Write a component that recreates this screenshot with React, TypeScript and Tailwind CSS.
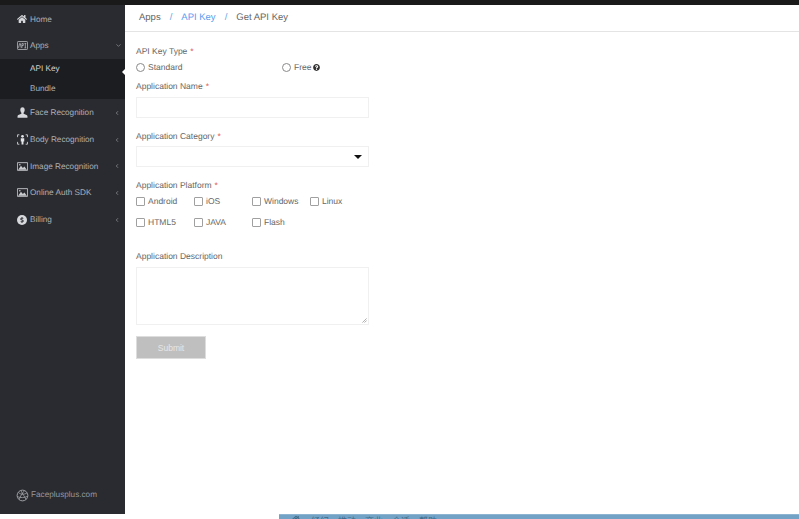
import { ChevronDown, ChevronLeft } from "lucide-react";
import { FaHome, FaQuestionCircle, FaDollarSign } from "react-icons/fa";

function ApiIcon() {
	return (
		<svg viewBox="0 0 14 11" className="w-[11px] h-[9px]">
			<rect x="0.5" y="0.5" width="13" height="10" rx="1" fill="none" stroke="#c4c6ca" />
			<path d="M2 8.5 L3.3 3 H4.2 L5.4 8.5 M6.3 8.5 V3 H8 V5.5 H6.3 M9.5 3 H11.8 M10.6 3 V8.5 M9.5 8.5 H11.8" fill="none" stroke="#c4c6ca" strokeWidth="0.9" />
		</svg>
	);
}

function UserIcon() {
	return (
		<svg viewBox="0 0 12 12" className="w-[11px] h-[11px]">
			<path d="M3.6 3 C3.6 1.2 4.8 0.3 6 0.3 C7.2 0.3 8.4 1.2 8.4 3 C8.4 4.5 7.8 5.6 7.2 6.3 V7.4 C8.8 8 11.2 8.6 11.4 9.8 V11.6 H0.6 V9.8 C0.8 8.6 3.2 8 4.8 7.4 V6.3 C4.2 5.6 3.6 4.5 3.6 3 Z" fill="#d6d8dc" />
		</svg>
	);
}

function BodyIcon() {
	return (
		<svg viewBox="0 0 14 14" className="w-[11px] h-[11px]">
			<path d="M0.7 4 V1 H3 M13.3 4 V1 H11 M0.7 10 V13 H3 M13.3 10 V13 H11" fill="none" stroke="#d4d6da" strokeWidth="1.1" />
			<circle cx="7" cy="3" r="1.7" fill="#e4e6ea" />
			<path d="M4.8 5.4 H9.2 V9.4 H8.2 V13.4 H5.8 V9.4 H4.8 Z" fill="#e4e6ea" />
		</svg>
	);
}

function ImageIcon() {
	return (
		<svg viewBox="0 0 14 11" className="w-[11px] h-[9px]">
			<rect x="0" y="0" width="14" height="11" rx="1" fill="#c9cbcf" />
			<rect x="1" y="1.2" width="12" height="8.6" fill="#2a2b30" />
			<path d="M1.5 9.5 L5 4.5 L7.5 7.5 L9.5 5.5 L12.5 9.5 Z" fill="#c9cbcf" />
			<circle cx="3.6" cy="3.2" r="1" fill="#c9cbcf" />
		</svg>
	);
}

function BillingIcon() {
	return (
		<span className="w-[10px] h-[10px] rounded-full bg-[#d6d8dc] flex items-center justify-center">
			<FaDollarSign className="w-[6px] h-[6px] text-[#2a2b30]" />
		</span>
	);
}

function GlobeIcon() {
	return (
		<svg viewBox="0 0 16 16" className="w-[13px] h-[13px]">
			<circle cx="8" cy="8" r="6.6" fill="none" stroke="#a9abb0" strokeWidth="1.1" />
			<path d="M3 4.5 C6 7 10 7 13.5 5 M4 13 C5 9 8 5 10.5 2 M6 2 C8 6 11 10 12.5 13 M1.8 9.5 C6 11 10 11 14.3 9" fill="none" stroke="#a9abb0" strokeWidth="0.9" />
		</svg>
	);
}

const navItems = [
	{ label: "Face Recognition", icon: <UserIcon />, h: "h-[27px]" },
	{ label: "Body Recognition", icon: <BodyIcon />, h: "h-[27px]" },
	{ label: "Image Recognition", icon: <ImageIcon />, h: "h-[26px]" },
	{ label: "Online Auth SDK", icon: <ImageIcon />, h: "h-[27px]" },
	{ label: "Billing", icon: <BillingIcon />, h: "h-[27px]" },
];

function Sidebar() {
	return (
		<aside className="w-[125px] shrink-0 bg-[#2a2b30] flex flex-col text-[8.2px] text-[#aeb0b5]">
			<div className="h-[26px] flex items-center pl-[17px] mt-[1px]">
				<span className="w-[13px] flex justify-start">
					<FaHome className="w-[10px] h-[10px] text-[#d6d8dc]" />
				</span>
				<span className="pt-[2px]">Home</span>
			</div>
			<div className="h-[27px] pb-[1px] flex items-center pl-[17px]">
				<span className="w-[13px] flex justify-start">
					<ApiIcon />
				</span>
				<span className="pt-[2px]">Apps</span>
				<ChevronDown className="ml-auto mr-[3px] w-[7px] h-[7px] text-[#8e9095]" strokeWidth={2.5} />
			</div>
			<div className="relative bg-[#1c1d21] h-[40px] flex flex-col pl-[30px]">
				<div className="h-[19px] pt-[2px] flex items-center text-[#d0d2d6]">API Key</div>
				<div className="h-[21px] pt-[2px] flex items-center">Bundle</div>
				<span className="absolute right-0 top-[10px] w-0 h-0 border-y-[3px] border-y-transparent border-r-[3px] border-r-white" />
			</div>
			{navItems.map((item) => (
				<div key={item.label} className={`${item.h} flex items-center pl-[17px]`}>
					<span className="w-[13px] flex justify-start">{item.icon}</span>
					<span className="pt-[2px]">{item.label}</span>
					<ChevronLeft className="ml-auto mr-[5px] w-[6px] h-[6px] text-[#8e9095]" strokeWidth={3} />
				</div>
			))}
			<div className="mt-auto h-[38px] flex items-center pl-[16px] gap-[2px] text-[#96989d]">
				<GlobeIcon />
				<span>Faceplusplus.com</span>
			</div>
		</aside>
	);
}

function Star() {
	return <span className="text-[#e0544c] ml-[3px]">*</span>;
}

function Check({ label, w }: { label: string; w: string }) {
	return (
		<label className={`${w} flex items-center gap-[3px]`}>
			<span className="w-[9px] h-[9px] rounded-[1px] border border-[#a0a0a0] bg-white" />
			<span>{label}</span>
		</label>
	);
}

function Form() {
	return (
		<div className="pl-[11px] pt-[14px] w-[244px] text-[8.5px] leading-[11px] text-[#666666]">
			<div className="h-[11px]">
				API Key Type
				<Star />
			</div>
			<div className="flex h-[11px] mt-[5px]">
				<label className="w-[146px] flex items-center gap-[3px]">
					<span className="w-[9px] h-[9px] rounded-full border border-[#8a8a8a] bg-white" />
					<span>Standard</span>
				</label>
				<label className="flex items-center gap-[3px]">
					<span className="w-[9px] h-[9px] rounded-full border border-[#8a8a8a] bg-white" />
					<span>Free</span>
					<FaQuestionCircle className="w-[7px] h-[7px] -ml-[1px] text-[#333]" />
				</label>
			</div>
			<div className="h-[11px] mt-[8px]">
				Application Name
				<Star />
			</div>
			<div className="h-[21px] mt-[5px] border border-[#f0f0f0] bg-white" />
			<div className="h-[11px] mt-[13px]">
				Application Category
				<Star />
			</div>
			<div className="h-[21px] mt-[4px] border border-[#f0f0f0] bg-white flex items-center justify-end pr-[6px]">
				<span className="w-0 h-0 border-x-[4px] border-x-transparent border-t-[4px] border-t-[#111]" />
			</div>
			<div className="h-[11px] mt-[13px]">
				Application Platform
				<Star />
			</div>
			<div className="flex h-[11px] mt-[5px]">
				<Check label="Android" w="w-[58px]" />
				<Check label="iOS" w="w-[58px]" />
				<Check label="Windows" w="w-[58px]" />
				<Check label="Linux" w="w-[50px]" />
			</div>
			<div className="flex h-[11px] mt-[10px]">
				<Check label="HTML5" w="w-[58px]" />
				<Check label="JAVA" w="w-[58px]" />
				<Check label="Flash" w="w-[58px]" />
			</div>
			<div className="h-[11px] mt-[23px]">Application Description</div>
			<div className="relative h-[58px] mt-[5px] border border-[#f0f0f0] bg-white">
				<svg viewBox="0 0 6 6" className="absolute right-[1px] bottom-[1px] w-[5px] h-[5px]">
					<path d="M0.5 5.5 L5.5 0.5 M3 5.5 L5.5 3" stroke="#777" strokeWidth="0.7" />
				</svg>
			</div>
			<button className="block w-[70px] h-[23px] mt-[11px] pt-[1px] bg-[#bfbfbf] border border-[#dddddd] text-[#e6e6e6] text-[8.5px]">
				Submit
			</button>
		</div>
	);
}

export default function App() {
	return (
		<div className="w-[799px] h-[519px] overflow-hidden flex flex-col bg-white font-['Liberation_Sans',Arial,sans-serif] [text-rendering:geometricPrecision]">
			<div className="h-[5px] shrink-0 bg-[#1a1a1a]" />
			<div className="flex-1 min-h-0 flex">
				<Sidebar />
				<main className="flex-1 min-w-0">
					<div className="h-[27px] pt-[1px] border-b border-[#e4e4e4] flex items-center pl-[14px] text-[9.5px] text-[#666666]">
						<span>Apps</span>
						<span className="mx-[9px] text-[#6aa5e8]">/</span>
						<span className="text-[#5a9df0]">API Key</span>
						<span className="mx-[9px] text-[#6aa5e8]">/</span>
						<span>Get API Key</span>
					</div>
					<Form />
				</main>
			</div>
			<div className="h-[5px] shrink-0 flex">
				<div className="w-[279px]" />
				<div className="flex-1 bg-[#72a3c6] border-t border-[#8db5d2] overflow-hidden flex text-[9px] leading-[11px] text-[#3f6a88] font-['Noto_Sans_CJK_SC',sans-serif] pl-[13px]">
					<FaHome className="w-[8px] h-[8px] mr-[11px]" />
					<span className="flex gap-[9px]">
						<span>经纪</span>
						<span>推动</span>
						<span>商业</span>
						<span>合适</span>
						<span>帮助</span>
					</span>
				</div>
			</div>
		</div>
	);
}
